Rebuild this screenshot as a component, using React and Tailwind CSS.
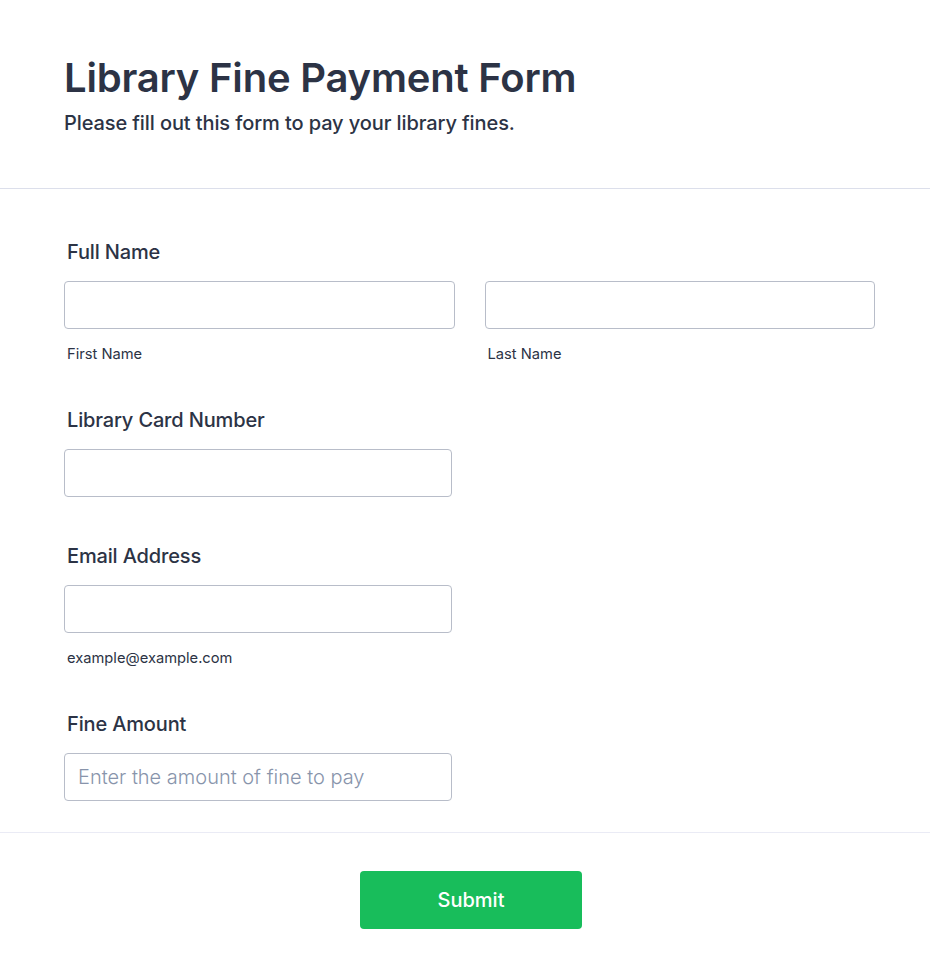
export default function App() {
  return (
    <div className="min-h-[979px] bg-white text-[#2c3345] font-['Inter',sans-serif]">
      {/* Header */}
      <div className="px-[64px] pt-[54px] pb-[53px] border-b border-[#dcdfeb]">
        <h1 className="text-[40px] leading-[48px] font-semibold tracking-[-0.2px]">Library Fine Payment Form</h1>
        <p className="mt-[9px] text-[20px] leading-[24px] font-medium tracking-[-0.1px]">Please fill out this form to pay your library fines.</p>
      </div>

      {/* Fields */}
      <div className="pl-[64px] pr-[55px] pt-[51px] pb-[31px] border-b border-[#eaebf5]">
        <div>
          <label className="block pl-[3px] text-[20px] leading-[24px] font-medium tracking-[-0.15px]">Full Name</label>
          <div className="mt-[17px] grid grid-cols-2 gap-[30px]">
            <div>
              <input className="block w-full h-[48px] rounded-[4px] border border-[#b8bdc9] px-[13px] outline-none" />
              <div className="mt-[15px] pl-[3px] text-[14.7px] leading-[20px]">First Name</div>
            </div>
            <div>
              <input className="block w-full h-[48px] rounded-[4px] border border-[#b8bdc9] px-[13px] outline-none" />
              <div className="mt-[15px] pl-[3px] text-[14.7px] leading-[20px]">Last Name</div>
            </div>
          </div>
        </div>

        <div className="mt-[44px]">
          <label className="block pl-[3px] text-[20px] leading-[24px] font-medium tracking-[-0.15px]">Library Card Number</label>
          <input className="mt-[17px] block w-[388px] h-[48px] rounded-[4px] border border-[#b8bdc9] px-[13px] outline-none" />
        </div>

        <div className="mt-[47px]">
          <label className="block pl-[3px] text-[20px] leading-[24px] font-medium tracking-[-0.15px]">Email Address</label>
          <input type="email" className="mt-[17px] block w-[388px] h-[48px] rounded-[4px] border border-[#b8bdc9] px-[13px] outline-none" />
          <div className="mt-[15px] pl-[3px] text-[14.7px] leading-[20px]">example@example.com</div>
        </div>

        <div className="mt-[44px]">
          <label className="block pl-[3px] text-[20px] leading-[24px] font-medium tracking-[-0.15px]">Fine Amount</label>
          <input
            placeholder="Enter the amount of fine to pay"
            className="mt-[17px] block w-[388px] h-[48px] rounded-[4px] border border-[#b8bdc9] px-[13px] text-[20px] font-light placeholder:text-[#8894ab] outline-none"
          />
        </div>
      </div>

      {/* Submit */}
      <div className="flex justify-center pl-[67px] pr-[55px] pt-[38px] pb-[50px]">
        <button className="w-[222px] h-[58px] rounded-[4px] bg-[#18bd5b] text-white text-[20px] font-medium">Submit</button>
      </div>
    </div>
  )
}
